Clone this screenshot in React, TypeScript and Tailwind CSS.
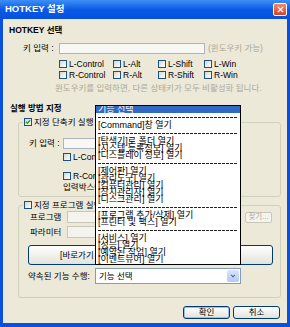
import React from "react";

const FONT = "font-['Liberation_Sans','Noto_Sans_CJK_KR',sans-serif]";

// 드롭다운 항목 ("-" 는 구분선)
const ITEMS = [
  "-",
  "[Command]창 열기",
  "-",
  "[탐색기]로 폴더 열기",
  "[시스템 등록정보] 열기",
  "[디스플레이 정보] 열기",
  "-",
  "[제어판] 열기",
  "[관리도구] 열기",
  "[컴퓨터관리] 열기",
  "[장치관리자] 열기",
  "[디스크관리] 열기",
  "-",
  "[프로그램 추가/삭제] 열기",
  "[프린터 및 팩스] 열기",
  "-",
  "[서비스] 열기",
  "[성능] 열기",
  "[예약된 작업] 열기",
  "[이벤트뷰어] 열기",
];

function Check({ checked = false }: { checked?: boolean }) {
  return (
    <span className="relative inline-block h-[8px] w-[8px] shrink-0 border border-[#1c5180] bg-linear-to-br from-[#d6d6cf] to-white">
      {checked && (
        <svg viewBox="0 0 6 6" className="absolute inset-0 h-full w-full">
          <path d="M1 2.8 L2.4 4.3 L5.1 1.3" fill="none" stroke="#21a121" strokeWidth="1.3" />
        </svg>
      )}
    </span>
  );
}

function CheckLabel({ label, checked }: { label: string; checked?: boolean }) {
  return (
    <span className="flex items-center gap-[2px] leading-[10px]">
      <Check checked={checked} />
      <span>{label}</span>
    </span>
  );
}

function Input({ className = "" }: { className?: string }) {
  return <span className={`block shrink-0 border ${className}`} />;
}

export default function App() {
  return (
    <div className={`${FONT} flex h-[327px] w-[290px] flex-col bg-[#0b50db] text-[8.5px] text-black`}>
      {/* 타이틀바 */}
      <div className="flex h-[19px] shrink-0 items-center justify-between bg-linear-to-b from-[#3d8ef7] via-[#0a5ae6] to-[#0650dd] pl-[5px] pr-[3px]">
        <span className="text-[9.5px] font-bold text-white">HOTKEY 설정</span>
        <span className="flex h-[13px] w-[14px] items-center justify-center rounded-[2px] border border-white bg-linear-to-b from-[#f08a6a] to-[#d6401c]">
          <svg viewBox="0 0 8 8" className="h-[7px] w-[7px]">
            <path d="M1 1 L7 7 M7 1 L1 7" stroke="white" strokeWidth="1.6" />
          </svg>
        </span>
      </div>

      <div className="relative mx-[3px] mb-[4px] flex flex-1 flex-col bg-[#ece9d8]">
        <div className="pl-[6px] pt-[6px] font-bold leading-[10px]">HOTKEY 선택</div>

        <div className="mt-[8px] flex h-[11px] items-center pl-[20px]">
          <span className="w-[36px]">키 입력 :</span>
          <Input className="h-[11px] w-[146px] border-[#aab4c2] bg-[#f7f7f4]" />
          <span className="ml-[3px] text-[#aca899]">(윈도우키 가능)</span>
        </div>

        <div className="mt-[4px] grid grid-cols-[54px_45px_46px_60px] pl-[56px]">
          {["L-Control", "L-Alt", "L-Shift", "L-Win", "R-Control", "R-Alt", "R-Shift", "R-Win"].map((k) => (
            <div key={k} className="flex h-[11px] items-center">
              <CheckLabel label={k} />
            </div>
          ))}
        </div>

        <div className="mt-[3px] pl-[52px] leading-[10px] text-[#aca899]">
          윈도우키를 입력하면, 다른 상태키가 모두 비활성화 됩니다.
        </div>

        <div className="mt-[10px] pl-[7px] font-bold leading-[10px]">실행 방법 지정</div>

        {/* 지정 단축키 실행 */}
        <fieldset className="ml-[15px] mr-[6px] mt-[4px] rounded-[3px] border border-[#d0d0bf] pb-[4px]">
          <legend className="ml-[4px] px-[1px]">
            <CheckLabel label="지정 단축키 실행" checked />
          </legend>
          <div className="mt-[11px] flex h-[11px] items-center pl-[10px]">
            <span className="w-[34px]">키 입력 :</span>
            <Input className="h-[11px] w-[172px] border-[#aab4c2] bg-[#f7f7f4]" />
          </div>
          <div className="mt-[3px] flex h-[10px] items-center pl-[44px]">
            <CheckLabel label="L-Control" />
          </div>
          <div className="mt-[9px] flex h-[10px] items-center pl-[44px]">
            <CheckLabel label="R-Control" />
          </div>
          <div className="mt-[1px] h-[10px] pl-[44px] leading-[10px]">입력박스에 원하는 키를 입력하세요.</div>
        </fieldset>

        {/* 지정 프로그램 실행 */}
        <fieldset className="ml-[15px] mr-[6px] mt-[3px] rounded-[3px] border border-[#d0d0bf] pb-[13px]">
          <legend className="ml-[4px] px-[1px]">
            <CheckLabel label="지정 프로그램 실행" />
          </legend>
          <div className="mt-[1px] flex h-[12px] items-center pl-[11px]">
            <span className="w-[37px]">프로그램</span>
            <Input className="h-[12px] w-[171px] border-[#c9c7ba] bg-[#f4f3ee]" />
            <span className="ml-[7px] flex h-[11px] w-[27px] items-center justify-center rounded-[2px] border border-[#c9c7ba] bg-[#f4f3ee] text-[7.5px] text-[#aca899]">
              찾기...
            </span>
          </div>
          <div className="mt-[3px] flex h-[12px] items-center pl-[11px]">
            <span className="w-[37px]">파라미터</span>
            <Input className="h-[12px] w-[171px] border-[#c9c7ba] bg-[#f4f3ee]" />
          </div>
          <div className="ml-[9px] mt-[7px] flex h-[20px] w-[245px] items-center justify-center rounded-[3px] border border-[#003c74] bg-linear-to-b from-white to-[#e3e2da]">
            [바로가기 아이콘]을 이곳으로 드래그 하여 놓으세요
          </div>
          <div className="mt-[3px] flex h-[16px] items-center pl-[9px]">
            <span className="w-[67px]">약속된 기능 수행:</span>
            <span className="flex h-[16px] w-[146px] items-center justify-between border border-[#7f9db9] bg-white pl-[3px] pr-[1px]">
              <span>기능 선택</span>
              <span className="flex h-[12px] w-[12px] items-center justify-center rounded-[2px] bg-linear-to-b from-[#d9e5fd] to-[#b3c9f6]">
                <svg viewBox="0 0 8 8" className="h-[6px] w-[6px]">
                  <path d="M1.5 2.5 L4 5 L6.5 2.5" fill="none" stroke="#4d6185" strokeWidth="1.4" />
                </svg>
              </span>
            </span>
          </div>
        </fieldset>

        <div className="mt-[8px] flex justify-end gap-[3px] pr-[7px]">
          <span className="flex h-[13px] w-[47px] items-center justify-center rounded-[3px] border border-[#003c74] bg-linear-to-b from-white to-[#e3e2da] shadow-[inset_0_0_0_1px_#9fbdf2]">
            확인
          </span>
          <span className="flex h-[13px] w-[47px] items-center justify-center rounded-[3px] border border-[#003c74] bg-linear-to-b from-white to-[#e3e2da]">
            취소
          </span>
        </div>

        {/* 펼쳐진 드롭다운 목록 */}
        <div className="absolute left-[92px] top-[86px] h-[160px] w-[146px] overflow-hidden border border-black bg-white text-[9px]">
          <div className="h-[7px] bg-[#316ac5] pl-[2px] leading-[7px] text-white">기능 선택</div>
          {ITEMS.map((it, i) =>
            it === "-" ? (
              <div key={i} className="flex h-[9px] items-center px-[2px]">
                <div className="h-px w-full bg-[repeating-linear-gradient(90deg,#222_0_3px,transparent_3px_4px)]" />
              </div>
            ) : (
              <div key={i} className="h-[7px] whitespace-nowrap pl-[2px] leading-[7px]">
                {it}
              </div>
            )
          )}
        </div>
      </div>
    </div>
  );
}
